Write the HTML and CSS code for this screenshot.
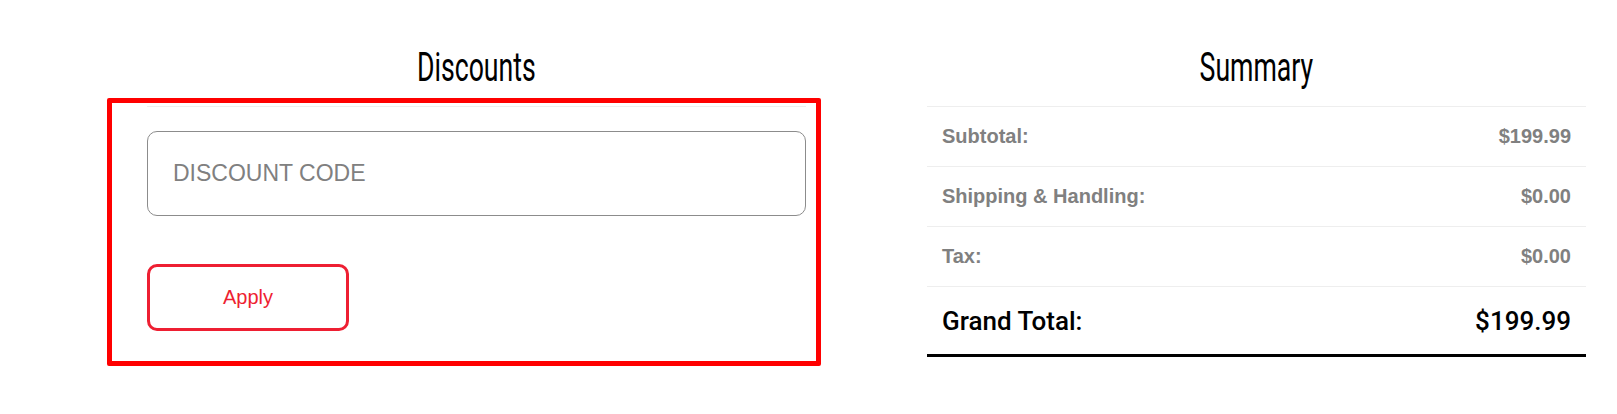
FILE: index.html
```html
<!DOCTYPE html>
<html lang="en">
    <head>
        <meta charset="utf-8" />
        <title>Cart</title>
        <link rel="stylesheet" href="styles.css">
    </head>
    <body>
        <div class="page">
            <div class="column">
                <h2 class="heading"><span>Discounts</span></h2>
                <div class="discountPanel">
                    <input class="codeInput" type="text" placeholder="DISCOUNT CODE">
                    <button class="applyButton" type="button">Apply</button>
                    <div class="highlight"></div>
                </div>
            </div>
            <div class="column">
                <h2 class="heading"><span>Summary</span></h2>
                <div class="summaryTable">
                    <div class="row">
                        <span>Subtotal:</span>
                        <span>$199.99</span>
                    </div>
                    <div class="row">
                        <span>Shipping &amp; Handling:</span>
                        <span>$0.00</span>
                    </div>
                    <div class="row">
                        <span>Tax:</span>
                        <span>$0.00</span>
                    </div>
                    <div class="row totalRow">
                        <span>Grand Total:</span>
                        <span>$199.99</span>
                    </div>
                </div>
            </div>
        </div>
    </body>
</html>
```

FILE: styles.css
```css
* {
    box-sizing: border-box;
}

body {
    margin: 0;
    background-color: #ffffff;
    font-family: 'Liberation Sans', Arial, sans-serif;
}

.page {
    display: grid;
    grid-template-columns: 659px 659px;
    column-gap: 121px;
    padding-top: 47px;
    padding-left: 147px;
}

.heading {
    margin: 0 0 18px 0;
    height: 41px;
    text-align: center;
    font-family: Roboto, 'Liberation Sans', sans-serif;
    font-weight: normal;
    font-size: 41px;
    line-height: 41px;
    color: #000000;
}

.heading span {
    display: inline-block;
    transform: scaleX(0.65);
}

.discountPanel {
    position: relative;
    display: flex;
    flex-direction: column;
    align-items: flex-start;
    border-top: 1px solid #eeeeee;
    padding-top: 24px;
    padding-bottom: 35px;
}

.codeInput {
    width: 100%;
    height: 85px;
    padding: 0 25px;
    border: 1px solid #8c8c8c;
    border-radius: 10px;
    outline: none;
    font-family: 'Liberation Sans', Arial, sans-serif;
    font-size: 23px;
    color: #333333;
}

.codeInput::placeholder {
    color: #808080;
}

.applyButton {
    margin-top: 48px;
    width: 202px;
    height: 67px;
    background-color: #ffffff;
    border: 3px solid #ee1f32;
    border-radius: 10px;
    font-family: 'Liberation Sans', Arial, sans-serif;
    font-size: 20px;
    color: #ee1f32;
}

/* red marker drawn over the discount block */
.highlight {
    position: absolute;
    top: -9px;
    left: -40px;
    right: -15px;
    bottom: 0;
    border: 5px solid #ff0000;
    border-radius: 2px;
    pointer-events: none;
}

.summaryTable {
    border-top: 1px solid #eeeeee;
}

.row {
    display: flex;
    justify-content: space-between;
    align-items: center;
    height: 60px;
    padding: 0 15px;
    border-bottom: 1px solid #eeeeee;
    font-weight: bold;
    font-size: 20px;
    color: #808080;
}

.totalRow {
    height: 70px;
    border-bottom: 3px solid #000000;
    font-family: Roboto, 'Liberation Sans', sans-serif;
    font-weight: 500;
    font-size: 26px;
    color: #000000;
}
```
